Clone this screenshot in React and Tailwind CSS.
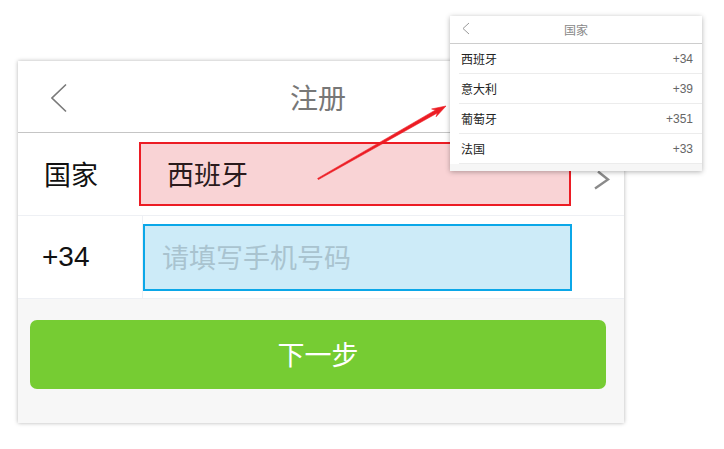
import React from "react";

const cjk = { fontFamily: '"Noto Sans CJK SC", "Noto Sans", sans-serif' };
const num = { fontFamily: '"Liberation Sans", "Noto Sans CJK SC", sans-serif' };

const countries = [
  ["西班牙", "+34"],
  ["意大利", "+39"],
  ["葡萄牙", "+351"],
  ["法国", "+33"],
];

export default function App() {
  return (
    <div className="relative w-[724px] h-[449px] bg-white overflow-hidden" style={cjk}>
      <div className="pt-[61px] pl-[18px]">
        <div className="w-[606px] h-[362px] flex flex-col bg-white shadow-[0_0_4px_rgba(0,0,0,0.3)]">
          {/* Header */}
          <div className="relative h-[72px] shrink-0 border-b border-[#c5c5c5] flex items-center justify-center">
            <svg className="absolute left-[33px] top-[22px]" width="16" height="30" viewBox="0 0 16 30">
              <polyline points="15,1.5 1,15 15,28.5" fill="none" stroke="#7a7a7a" strokeWidth="1.6" />
            </svg>
            <span className="text-[28px] leading-none text-[#777] pr-[6px]">注册</span>
          </div>
          {/* Row 1 */}
          <div className="h-[83px] shrink-0 border-b border-[#eef0f4] flex items-start">
            <div className="w-[121px] h-full flex items-center pl-[26px] text-[27px] text-[#111]">国家</div>
            <div className="mt-[9px] w-[432px] h-[64px] border-2 border-[#ec1c24] bg-[#f9d3d5] flex items-center pl-[26px] text-[27px] text-[#2a1a1c]">
              西班牙
            </div>
            <svg className="ml-[22px] mt-[37px]" width="18" height="20" viewBox="0 0 18 20">
              <polyline points="5,1.5 15,9.5 2,18.5" fill="none" stroke="#8a8a8a" strokeWidth="2.4" />
            </svg>
          </div>
          {/* Row 2 */}
          <div className="h-[83px] shrink-0 border-b border-[#eef0f4] flex">
            <div className="w-[125px] h-full border-r border-[#eef0f4] flex items-center pl-[24px] text-[28px] text-[#111]" style={num}>
              +34
            </div>
            <div className="pt-[8px]">
              <div className="w-[429px] h-[67px] border-2 border-[#0ba7e8] bg-[#cdebf8] flex items-center pl-[17px] text-[27px] text-[#a9c3cf]">
                请填写手机号码
              </div>
            </div>
          </div>
          {/* Bottom */}
          <div className="flex-1 bg-[#f7f7f7] pt-[21px] pl-[12px]">
            <div className="w-[576px] h-[69px] rounded-[7px] bg-[#76cc33] flex items-center justify-center text-[27px] text-white">
              下一步
            </div>
          </div>
        </div>
      </div>

      {/* Arrow annotation */}
      <svg className="absolute left-0 top-0 pointer-events-none" width="724" height="449" viewBox="0 0 724 449">
        <polygon
          points="446,106 431.6,109 435.6,109.9 317.65,178.4 318.35,179.6 437.3,113 436.1,116.8"
          fill="#ec1c24"
          stroke="#ec1c24"
          strokeWidth="0.6"
          strokeLinejoin="round"
        />
      </svg>

      {/* Popup */}
      <div className="absolute left-[450px] top-[16px] w-[252px] h-[155px] bg-white shadow-[0_1px_5px_rgba(0,0,0,0.3)] flex flex-col">
        <div className="relative h-[28px] shrink-0 border-b border-[#cdcdcd] flex items-center justify-center">
          <svg className="absolute left-[12px] top-[6px]" width="8" height="13" viewBox="0 0 8 13">
            <polyline points="7,1 1,6.5 7,12" fill="none" stroke="#9a9a9a" strokeWidth="1" />
          </svg>
          <span className="text-[12px] leading-none text-[#888] mt-[1px]">国家</span>
        </div>
        {countries.map(([name, code]) => (
          <div key={name} className="h-[30px] shrink-0 ml-[9px] border-b border-[#ececec] flex items-center justify-between pl-[2px] pr-[9px]">
            <span className="text-[12px] text-[#222]">{name}</span>
            <span className="text-[12px] text-[#666]" style={num}>{code}</span>
          </div>
        ))}
        <div className="flex-1 bg-[#f6f6f6]" />
      </div>
    </div>
  );
}
